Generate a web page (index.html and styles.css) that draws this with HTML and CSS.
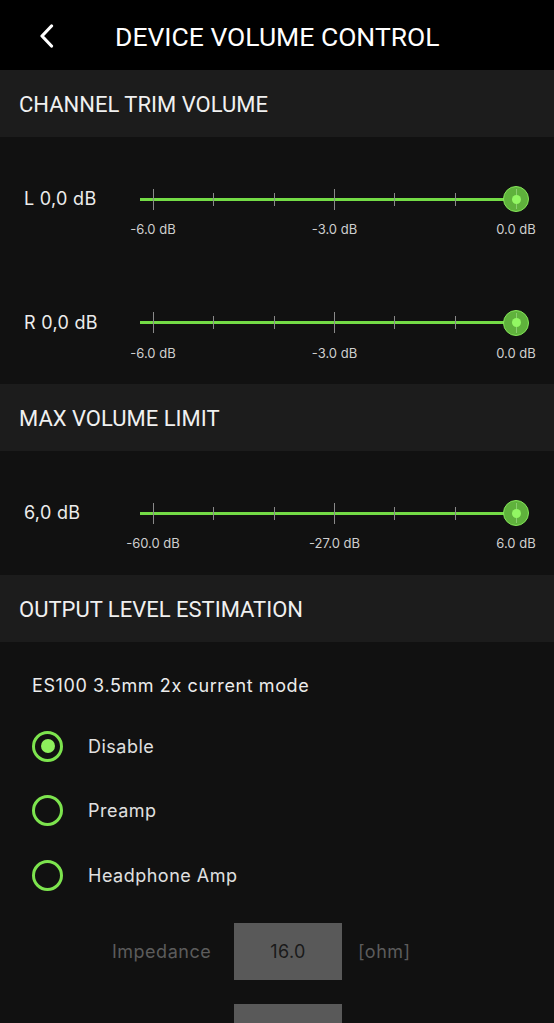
FILE: index.html
```html
<!DOCTYPE html>
<html>
<head>
<meta charset="utf-8">
<link rel="stylesheet" href="styles.css">
</head>
<body>
<header class="topbar">
  <svg class="back" width="14" height="24" viewBox="0 0 14 24"><path d="M11.5 2 L2 12 L11.5 22" fill="none" stroke="#fff" stroke-width="3.2" stroke-linecap="round" stroke-linejoin="round"/></svg>
  <h1 class="title">DEVICE VOLUME CONTROL</h1>
</header>

<div class="sec">CHANNEL TRIM VOLUME</div>
<div class="panel">
  <div class="row">
    <div class="name">L 0,0 dB</div>
    <div class="slider-col">
      <div class="slider">
        <div class="ticks"><i class="major"></i><i></i><i></i><i class="major"></i><i></i><i></i><i class="major"></i></div>
        <div class="thumb"></div>
      </div>
      <div class="labels"><span>-6.0 dB</span><span>-3.0 dB</span><span>0.0 dB</span></div>
    </div>
  </div>
  <div class="row">
    <div class="name">R 0,0 dB</div>
    <div class="slider-col">
      <div class="slider">
        <div class="ticks"><i class="major"></i><i></i><i></i><i class="major"></i><i></i><i></i><i class="major"></i></div>
        <div class="thumb"></div>
      </div>
      <div class="labels"><span>-6.0 dB</span><span>-3.0 dB</span><span>0.0 dB</span></div>
    </div>
  </div>
</div>

<div class="sec">MAX VOLUME LIMIT</div>
<div class="panel">
  <div class="row">
    <div class="name">6,0 dB</div>
    <div class="slider-col">
      <div class="slider">
        <div class="ticks"><i class="major"></i><i></i><i></i><i class="major"></i><i></i><i></i><i class="major"></i></div>
        <div class="thumb"></div>
      </div>
      <div class="labels"><span>-60.0 dB</span><span>-27.0 dB</span><span>6.0 dB</span></div>
    </div>
  </div>
</div>

<div class="sec">OUTPUT LEVEL ESTIMATION</div>
<div class="panel output">
  <div class="mode">ES100 3.5mm 2x current mode</div>
  <div class="radios">
    <div class="radio checked"><span class="ring"></span><span class="rlabel">Disable</span></div>
    <div class="radio"><span class="ring"></span><span class="rlabel">Preamp</span></div>
    <div class="radio"><span class="ring"></span><span class="rlabel">Headphone Amp</span></div>
  </div>
  <div class="fields">
    <div class="field"><span class="flabel">Impedance</span><span class="box">16.0</span><span class="unit">[ohm]</span></div>
    <div class="field"><span class="flabel"></span><span class="box"></span><span class="unit"></span></div>
  </div>
</div>
</body>
</html>
```

FILE: styles.css
```css
html, body {
  margin: 0;
  padding: 0;
  background: #111111;
}
body {
  width: 554px;
  height: 1023px;
  overflow: hidden;
  font-family: Inter, "Noto Sans", sans-serif;
  color: #e6e6e6;
}
.topbar {
  height: 70px;
  box-sizing: border-box;
  padding-top: 2px;
  background: #000;
  display: flex;
  align-items: center;
}
.back {
  margin-left: 40px;
  flex: none;
}
.title {
  margin: 0 0 0 61px;
  font-family: Roboto, sans-serif;
  font-weight: 400;
  font-size: 26.5px;
  color: #fff;
  letter-spacing: 0;
}
.sec {
  height: 67px;
  box-sizing: border-box;
  padding-top: 2px;
  background: #1c1c1c;
  display: flex;
  align-items: center;
  padding-left: 19px;
  font-family: Roboto, sans-serif;
  font-size: 22px;
  color: #f0f0f0;
}
.panel {
  background: #111;
}
.row {
  height: 123.5px;
  box-sizing: border-box;
  padding-top: 49px;
  display: flex;
}
.name {
  width: 140px;
  padding-left: 24px;
  box-sizing: border-box;
  height: 26px;
  line-height: 26px;
  font-size: 18px;
  letter-spacing: 0.3px;
  color: #ececec;
  flex: none;
}
.slider-col {
  width: 389px;
  flex: none;
}
.slider {
  position: relative;
  height: 26px;
  padding: 0 13px;
  background: linear-gradient(#74dc46, #74dc46) no-repeat left center / calc(100% - 13px) 3px;
}
.ticks {
  height: 100%;
  display: flex;
  justify-content: space-between;
  align-items: center;
}
.ticks i {
  display: block;
  width: 1px;
  height: 13px;
  background: #8a8a8a;
}
.ticks i.major {
  height: 21px;
}
.thumb {
  position: absolute;
  right: 0;
  top: 0;
  width: 26px;
  height: 26px;
  box-sizing: border-box;
  border-radius: 50%;
  background: #5fb23c;
  border: 1.5px solid #86e85a;
  display: flex;
  align-items: center;
  justify-content: center;
}
.thumb::before {
  content: "";
  position: absolute;
  left: 50%;
  top: 2px;
  bottom: 2px;
  width: 1px;
  margin-left: -0.5px;
  background: rgba(190, 240, 170, 0.45);
}
.thumb::after {
  content: "";
  width: 9px;
  height: 9px;
  border-radius: 50%;
  background: #92f763;
  position: relative;
}
.labels {
  margin: 10px 13px 0;
  display: flex;
  justify-content: space-between;
}
.labels span {
  width: 0;
  display: flex;
  justify-content: center;
  white-space: nowrap;
  font-size: 13px;
  line-height: 15px;
  color: #cfcfcf;
}
.output {
  padding-top: 32px;
}
.mode {
  padding-left: 32px;
  font-size: 18px;
  line-height: 24px;
  letter-spacing: 0.6px;
  color: #ececec;
}
.radios {
  margin-top: 33px;
  display: flex;
  flex-direction: column;
  gap: 33.5px;
}
.radio {
  display: flex;
  align-items: center;
  height: 31px;
  padding-left: 32px;
}
.ring {
  width: 31px;
  height: 31px;
  box-sizing: border-box;
  border: 3px solid #7de44e;
  border-radius: 50%;
  display: flex;
  align-items: center;
  justify-content: center;
  flex: none;
}
.radio.checked .ring::after {
  content: "";
  width: 14px;
  height: 14px;
  border-radius: 50%;
  background: #8ef05c;
}
.rlabel {
  margin-left: 25px;
  font-size: 18px;
  letter-spacing: 0.5px;
  color: #e0e0e0;
}
.fields {
  margin-top: 32px;
  display: flex;
  flex-direction: column;
  gap: 24px;
}
.field {
  display: grid;
  grid-template-columns: 211px 131px auto;
  align-items: center;
}
.flabel {
  padding-left: 112px;
  font-size: 18px;
  letter-spacing: 0.5px;
  color: #5c5c5c;
}
.box {
  margin-left: 23px;
  width: 108px;
  height: 57px;
  background: #595959;
  display: flex;
  align-items: center;
  justify-content: center;
  font-size: 18px;
  letter-spacing: 0.4px;
  color: #1a1a1a;
}
.unit {
  margin-left: 16px;
  font-size: 18px;
  letter-spacing: 0.5px;
  color: #5c5c5c;
}
```
